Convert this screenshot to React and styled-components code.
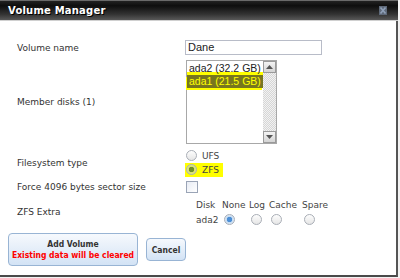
import React from 'react'
import styled, { createGlobalStyle } from 'styled-components'

const GlobalStyle = createGlobalStyle`
  html, body {
    margin: 0;
    padding: 0;
    background: #f2f2f2;
  }
`

const disks = [
  { name: 'ada2 (32.2 GB)', mark: true },
  { name: 'ada1 (21.5 GB)', selected: true },
]

const extraCols = ['Disk', 'None', 'Log', 'Cache', 'Spare']

const CloseIcon = () => (
  <svg width="8" height="9" viewBox="0 0 8 9">
    <rect x="0" y="0" width="8" height="9" fill="#5d6878" />
    <path d="M1.5 1.5 L6.5 7.5 M6.5 1.5 L1.5 7.5" stroke="#8fa0b8" strokeWidth="1.6" />
  </svg>
)

const Arrow = ({ down }) => (
  <svg width="7" height="4" viewBox="0 0 7 4">
    <path d={down ? 'M0 0 L7 0 L3.5 4 Z' : 'M0 4 L7 4 L3.5 0 Z'} fill="#555" />
  </svg>
)

const App = () => {
  return (
    <>
      <GlobalStyle />
      <Dialog>
        <TitleBar>
          <Title>Volume Manager</Title>
          <CloseIcon />
        </TitleBar>
        <Body>
          <Form>
            <Label>Volume name</Label>
            <TextInput>Dane</TextInput>

            <Label>Member disks (1)</Label>
            <ListBox>
              <Options>
                {disks.map((d) => (
                  <Option key={d.name} selected={d.selected} mark={d.mark}>
                    {d.name}
                  </Option>
                ))}
              </Options>
              <ScrollBar>
                <ScrollButton>
                  <Arrow />
                </ScrollButton>
                <ScrollButton>
                  <Arrow down />
                </ScrollButton>
              </ScrollBar>
            </ListBox>

            <Label>Filesystem type</Label>
            <RadioGroup>
              <RadioRow>
                <Radio />
                <RadioText>UFS</RadioText>
              </RadioRow>
              <RadioRow highlight>
                <Radio checked tone="green" />
                <RadioText>ZFS</RadioText>
              </RadioRow>
            </RadioGroup>

            <Label>Force 4096 bytes sector size</Label>
            <Checkbox />

            <Label>ZFS Extra</Label>
            <ExtraTable>
              {extraCols.map((c) => (
                <ExtraHead key={c}>{c}</ExtraHead>
              ))}
              <ExtraHead>ada2</ExtraHead>
              <ExtraCell>
                <Radio checked tone="blue" />
              </ExtraCell>
              <ExtraCell>
                <Radio />
              </ExtraCell>
              <ExtraCell>
                <Radio />
              </ExtraCell>
              <ExtraCell>
                <Radio />
              </ExtraCell>
            </ExtraTable>
          </Form>

          <ButtonRow>
            <Button wide>
              <ButtonText>Add Volume</ButtonText>
              <Warning>Existing data will be cleared</Warning>
            </Button>
            <Button>
              <ButtonText>Cancel</ButtonText>
            </Button>
          </ButtonRow>
        </Body>
      </Dialog>
    </>
  )
}

export default App

const Dialog = styled.div`
  width: 398px;
  height: 277px;
  box-sizing: border-box;
  background: #fff;
  border-right: 2px solid #555;
  border-bottom: 2px solid #4a4a4a;
  display: flex;
  flex-direction: column;
  font-family: 'DejaVu Sans', Verdana, sans-serif;
`

const TitleBar = styled.div`
  height: 21px;
  box-sizing: border-box;
  margin-right: -2px;
  display: flex;
  align-items: center;
  justify-content: space-between;
  padding: 0 11px 0 8px;
  background: linear-gradient(#222 0%, #0e0e0e 25%, #333 70%, #585858 100%);
  border-top: 1px solid #6a6a6a;
  border-bottom: 1px solid #d0d0d0;
`

const Title = styled.div`
  color: #fff;
  font-weight: bold;
  font-size: 10px;
  letter-spacing: 0.2px;
  text-shadow: 1px 1px 0 #000;
`

const Body = styled.div`
  flex: 1;
  display: flex;
  flex-direction: column;
  padding-top: 19px;
`

const Form = styled.div`
  display: grid;
  grid-template-columns: 168px 1fr;
  grid-template-rows: 15px 84px 27px 11px 30px;
  row-gap: 5px;
  align-items: center;
  padding-left: 17px;
`

const Label = styled.div`
  font-size: 9px;
  color: #333;
`

const TextInput = styled.div`
  width: 137px;
  height: 15px;
  box-sizing: border-box;
  border: 1px solid #b8bcc8;
  font-family: 'Liberation Sans', Arial, sans-serif;
  font-size: 11px;
  line-height: 13px;
  padding-left: 2px;
  color: #222;
`

const ListBox = styled.div`
  width: 91px;
  height: 84px;
  box-sizing: border-box;
  border: 1px solid #a8a8a8;
  display: flex;
  margin-left: 1px;
`

const Options = styled.div`
  flex: 1;
  padding-top: 1px;
`

const Option = styled.div`
  font-family: 'Liberation Sans', Arial, sans-serif;
  font-size: 10.5px;
  line-height: 13px;
  padding-left: 2px;
  white-space: nowrap;
  color: ${(p) => (p.selected ? '#ffff00' : '#222')};
  background: ${(p) =>
    p.selected
      ? '#77761f'
      : p.mark
      ? 'linear-gradient(transparent 80%, #ffff00 80%)'
      : 'transparent'};
  box-shadow: ${(p) => (p.selected ? '-1px 2px 0 #ffff00' : 'none')};
`

const ScrollBar = styled.div`
  width: 13px;
  display: flex;
  flex-direction: column;
  justify-content: space-between;
  background: repeating-conic-gradient(#d6d6d6 0% 25%, #f2f2f2 0% 50%) 0 0 / 2px 2px;
`

const ScrollButton = styled.div`
  height: 12px;
  box-sizing: border-box;
  display: flex;
  align-items: center;
  justify-content: center;
  background: linear-gradient(#f4f4f4, #d4d4d4);
  border: 1px solid #9a9a9a;
`

const RadioGroup = styled.div`
  display: flex;
  flex-direction: column;
`

const RadioRow = styled.div`
  display: flex;
  align-items: center;
  gap: 5px;
  height: 14px;
  width: 38px;
  background: ${(p) => (p.highlight ? '#ffff00' : 'transparent')};
`

const RadioText = styled.span`
  font-size: 9px;
  color: #444;
`

const Radio = styled.span`
  width: 11px;
  height: 11px;
  box-sizing: border-box;
  border-radius: 50%;
  border: 1px solid #a9aeb6;
  background: ${(p) =>
    p.checked
      ? p.tone === 'green'
        ? 'radial-gradient(circle, #6f8f28 0 2.5px, #d8e070 3px, #e9ee9c 100%)'
        : 'radial-gradient(circle, #4d8fd6 0 2.5px, #c6dcf2 3px, #eef4fb 100%)'
      : 'linear-gradient(#fdfdfd, #e6e6e6)'};
  display: inline-block;
  margin-left: 1px;
`

const Checkbox = styled.span`
  width: 12px;
  height: 12px;
  box-sizing: border-box;
  border: 1px solid #9aa4b6;
  background: linear-gradient(135deg, #e8ecf4, #fff);
  margin-left: 1px;
`

const ExtraTable = styled.div`
  display: grid;
  grid-template-columns: 26px 27px 20px 33px auto;
  grid-template-rows: 15px 15px;
  align-items: center;
  margin-left: 11px;
`

const ExtraHead = styled.div`
  font-size: 9px;
  color: #444;
`

const ExtraCell = styled.div`
  display: flex;
  padding-left: 1px;
`

const ButtonRow = styled.div`
  display: flex;
  align-items: center;
  gap: 8px;
  padding-left: 8px;
  margin-top: 6px;
`

const Button = styled.div`
  width: ${(p) => (p.wide ? '130px' : '40px')};
  height: ${(p) => (p.wide ? '33px' : '23px')};
  box-sizing: border-box;
  border: 1px solid #98b4d4;
  border-radius: 4px;
  background: linear-gradient(#f6f9fd, #d3e3f5);
  display: flex;
  flex-direction: column;
  align-items: center;
  justify-content: center;
  gap: 1px;
`

const ButtonText = styled.div`
  font-family: 'DejaVu Sans Condensed', 'Liberation Sans', sans-serif;
  font-size: 8.5px;
  font-weight: bold;
  white-space: nowrap;
  color: #333;
`

const Warning = styled.div`
  font-family: 'DejaVu Sans Condensed', 'Liberation Sans', sans-serif;
  font-size: 8.5px;
  font-weight: bold;
  white-space: nowrap;
  color: #ff0000;
`
